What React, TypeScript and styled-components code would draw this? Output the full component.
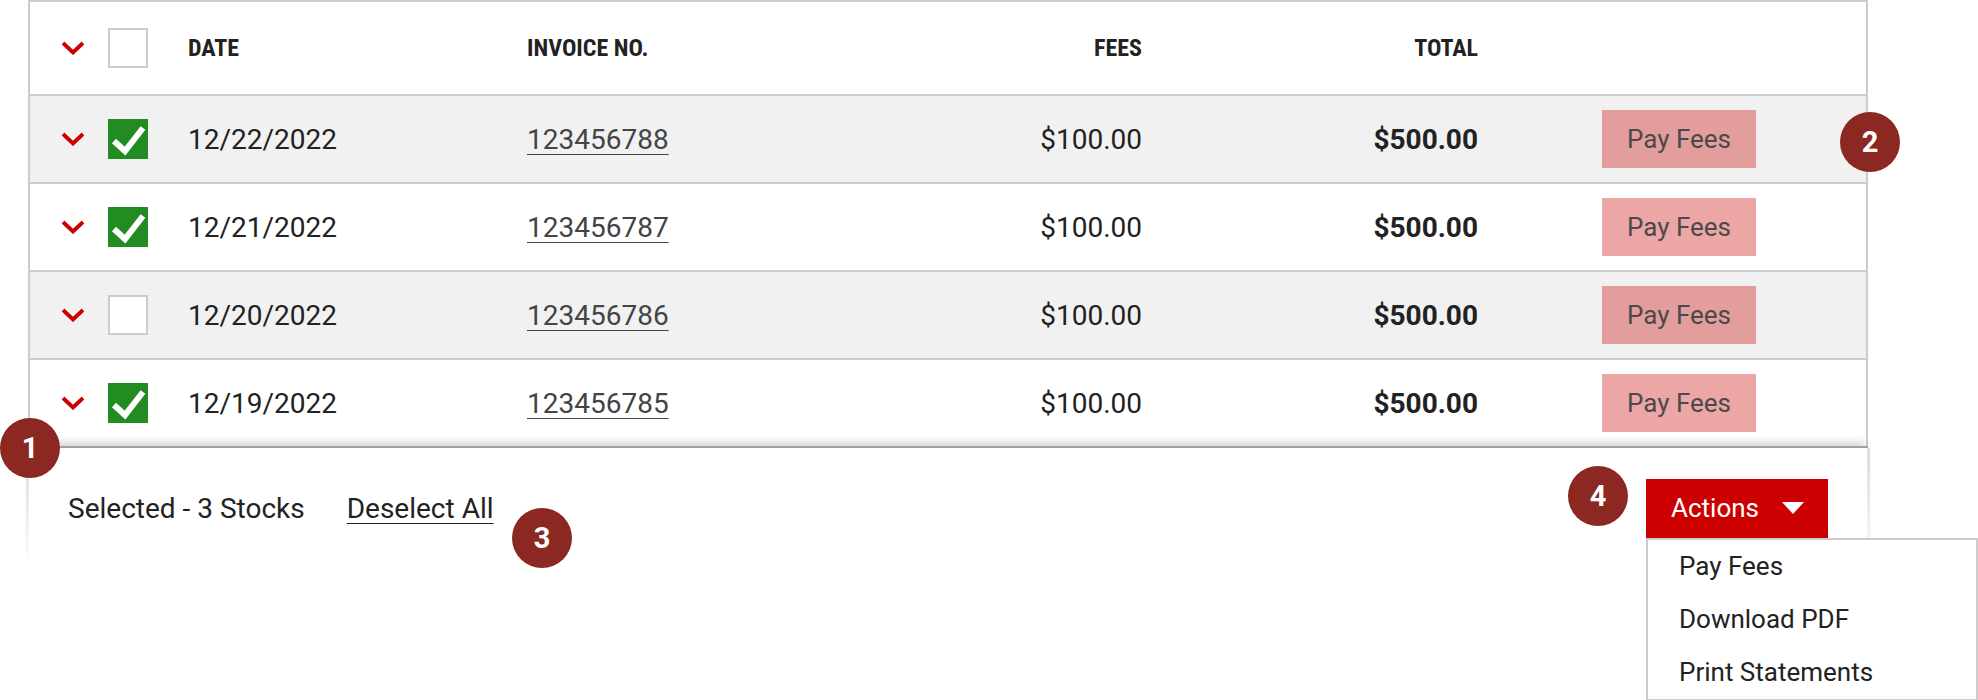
import styled, { createGlobalStyle } from 'styled-components';

const GlobalStyle = createGlobalStyle`
  body {
    margin: 0;
    background: #fff;
    font-family: Roboto, "Liberation Sans", sans-serif;
    color: #222;
  }
`;

const Page = styled.div`
  position: relative;
  width: 1840px;
  min-height: 700px;
  padding-left: 28px;
`;

const Table = styled.div`
  border: 2px solid #ccc;
  border-bottom: none;
`;

const GridRow = styled.div<{ $striped?: boolean; $header?: boolean }>`
  display: grid;
  grid-template-columns: 47px 80px 339px 415px 200px 336px 388px;
  align-items: center;
  box-sizing: border-box;
  padding-left: 31px;
  height: ${(p) => (p.$header ? '92px' : '88px')};
  border-top: ${(p) => (p.$header ? 'none' : '2px solid #ccc')};
  background: ${(p) => (p.$striped ? '#f1f1f1' : '#fff')};
`;

const HeadCell = styled.div<{ $right?: boolean }>`
  font-family: "Liberation Sans Narrow", "Roboto Condensed", Roboto, sans-serif;
  font-weight: 700;
  font-size: 24px;
  color: #222;
  text-align: ${(p) => (p.$right ? 'right' : 'left')};
`;

const Cell = styled.div<{ $right?: boolean; $bold?: boolean }>`
  font-size: 28px;
  font-weight: ${(p) => (p.$bold ? 700 : 400)};
  color: #222;
  text-align: ${(p) => (p.$right ? 'right' : 'left')};
`;

const InvoiceLink = styled.a`
  font-size: 28px;
  color: #444;
  text-decoration: underline;
  text-underline-offset: 5px;
  text-decoration-thickness: 1px;
`;

const Chevron = styled.svg`
  display: block;
  width: 24px;
  height: 14px;
`;

const Box = styled.div<{ $checked?: boolean }>`
  box-sizing: border-box;
  width: 40px;
  height: 40px;
  background: ${(p) => (p.$checked ? '#228b22' : '#fff')};
  border: ${(p) => (p.$checked ? 'none' : '2px solid #ccc')};
  display: flex;
  align-items: center;
  justify-content: center;
`;

const PayButton = styled.button`
  margin-left: 124px;
  width: 154px;
  height: 58px;
  border: none;
  background: rgba(204, 0, 0, 0.35);
  color: #4a4a4a;
  font-family: Roboto, sans-serif;
  font-size: 26px;
  padding: 0;
  cursor: pointer;
`;

const Footer = styled.div`
  position: relative;
  display: flex;
  align-items: center;
  box-sizing: border-box;
  width: 1840px;
  height: 116px;
  padding: 6px 40px 0 40px;
  border-top: 2px solid #a0a0a0;
  background: #fff;
  box-shadow: 0 -7px 8px -3px rgba(0, 0, 0, 0.16);

  &::before,
  &::after {
    content: '';
    position: absolute;
    top: 0;
    width: 3px;
    height: 100%;
    background: linear-gradient(to bottom, rgba(0, 0, 0, 0.12), rgba(0, 0, 0, 0));
  }

  &::before {
    left: -2px;
  }

  &::after {
    right: -2px;
  }
`;

const SelectedText = styled.span`
  font-size: 28px;
  color: #222;
`;

const DeselectLink = styled.a`
  margin-left: 42px;
  font-size: 28px;
  color: #222;
  text-decoration: underline;
  text-underline-offset: 5px;
  text-decoration-thickness: 1px;
`;

const ActionsWrap = styled.div`
  position: relative;
  margin-left: auto;
`;

const ActionsButton = styled.button`
  display: flex;
  align-items: center;
  gap: 23px;
  box-sizing: border-box;
  width: 182px;
  height: 59px;
  padding: 0 25px;
  border: none;
  background: #cc0000;
  color: #fff;
  font-family: Roboto, sans-serif;
  font-size: 26px;
`;

const Caret = styled.span`
  width: 0;
  height: 0;
  border-left: 11.5px solid transparent;
  border-right: 11.5px solid transparent;
  border-top: 12px solid #fff;
`;

const Menu = styled.ul`
  position: absolute;
  top: 59px;
  left: 0;
  z-index: 2;
  box-sizing: border-box;
  width: 332px;
  margin: 0;
  padding: 0;
  list-style: none;
  background: #fff;
  border: 2px solid #ccc;
`;

const MenuItem = styled.li`
  height: 53px;
  line-height: 53px;
  padding-left: 31px;
  font-size: 26px;
  color: #222;
`;

const Badge = styled.div<{ $x: number; $y: number }>`
  position: absolute;
  left: ${(p) => p.$x - 30}px;
  top: ${(p) => p.$y - 30}px;
  z-index: 3;
  width: 60px;
  height: 60px;
  border-radius: 50%;
  background: #8a2821;
  color: #fff;
  font-family: Roboto, sans-serif;
  font-weight: 700;
  font-size: 29px;
  display: flex;
  align-items: center;
  justify-content: center;
`;

const rows = [
  { date: '12/22/2022', invoice: '123456788', checked: true },
  { date: '12/21/2022', invoice: '123456787', checked: true },
  { date: '12/20/2022', invoice: '123456786', checked: false },
  { date: '12/19/2022', invoice: '123456785', checked: true },
];

function Expand() {
  return (
    <Chevron viewBox="0 0 24 14">
      <polyline points="2,2 12,11.5 22,2" fill="none" stroke="#cc0000" strokeWidth="3.8" />
    </Chevron>
  );
}

function CheckBox({ checked }: { checked?: boolean }) {
  return (
    <Box $checked={checked}>
      {checked && (
        <svg width="40" height="40" viewBox="0 0 40 40">
          <polyline points="6,22 17,32 35,9" fill="none" stroke="#fff" strokeWidth="6" />
        </svg>
      )}
    </Box>
  );
}

export default function App() {
  return (
    <>
      <GlobalStyle />
      <Page>
        <Table>
          <GridRow $header>
            <Expand />
            <CheckBox />
            <HeadCell>DATE</HeadCell>
            <HeadCell>INVOICE NO.</HeadCell>
            <HeadCell $right>FEES</HeadCell>
            <HeadCell $right>TOTAL</HeadCell>
            <div />
          </GridRow>
          {rows.map((row, i) => (
            <GridRow key={row.invoice} $striped={i % 2 === 0}>
              <Expand />
              <CheckBox checked={row.checked} />
              <Cell>{row.date}</Cell>
              <Cell>
                <InvoiceLink>{row.invoice}</InvoiceLink>
              </Cell>
              <Cell $right>$100.00</Cell>
              <Cell $right $bold>$500.00</Cell>
              <div>
                <PayButton>Pay Fees</PayButton>
              </div>
            </GridRow>
          ))}
        </Table>
        <Footer>
          <SelectedText>Selected - 3 Stocks</SelectedText>
          <DeselectLink>Deselect All</DeselectLink>
          <ActionsWrap>
            <ActionsButton>
              Actions
              <Caret />
            </ActionsButton>
            <Menu>
              <MenuItem>Pay Fees</MenuItem>
              <MenuItem>Download PDF</MenuItem>
              <MenuItem>Print Statements</MenuItem>
            </Menu>
          </ActionsWrap>
        </Footer>
        <Badge $x={30} $y={448}>1</Badge>
        <Badge $x={1870} $y={142}>2</Badge>
        <Badge $x={542} $y={538}>3</Badge>
        <Badge $x={1598} $y={496}>4</Badge>
      </Page>
    </>
  );
}
